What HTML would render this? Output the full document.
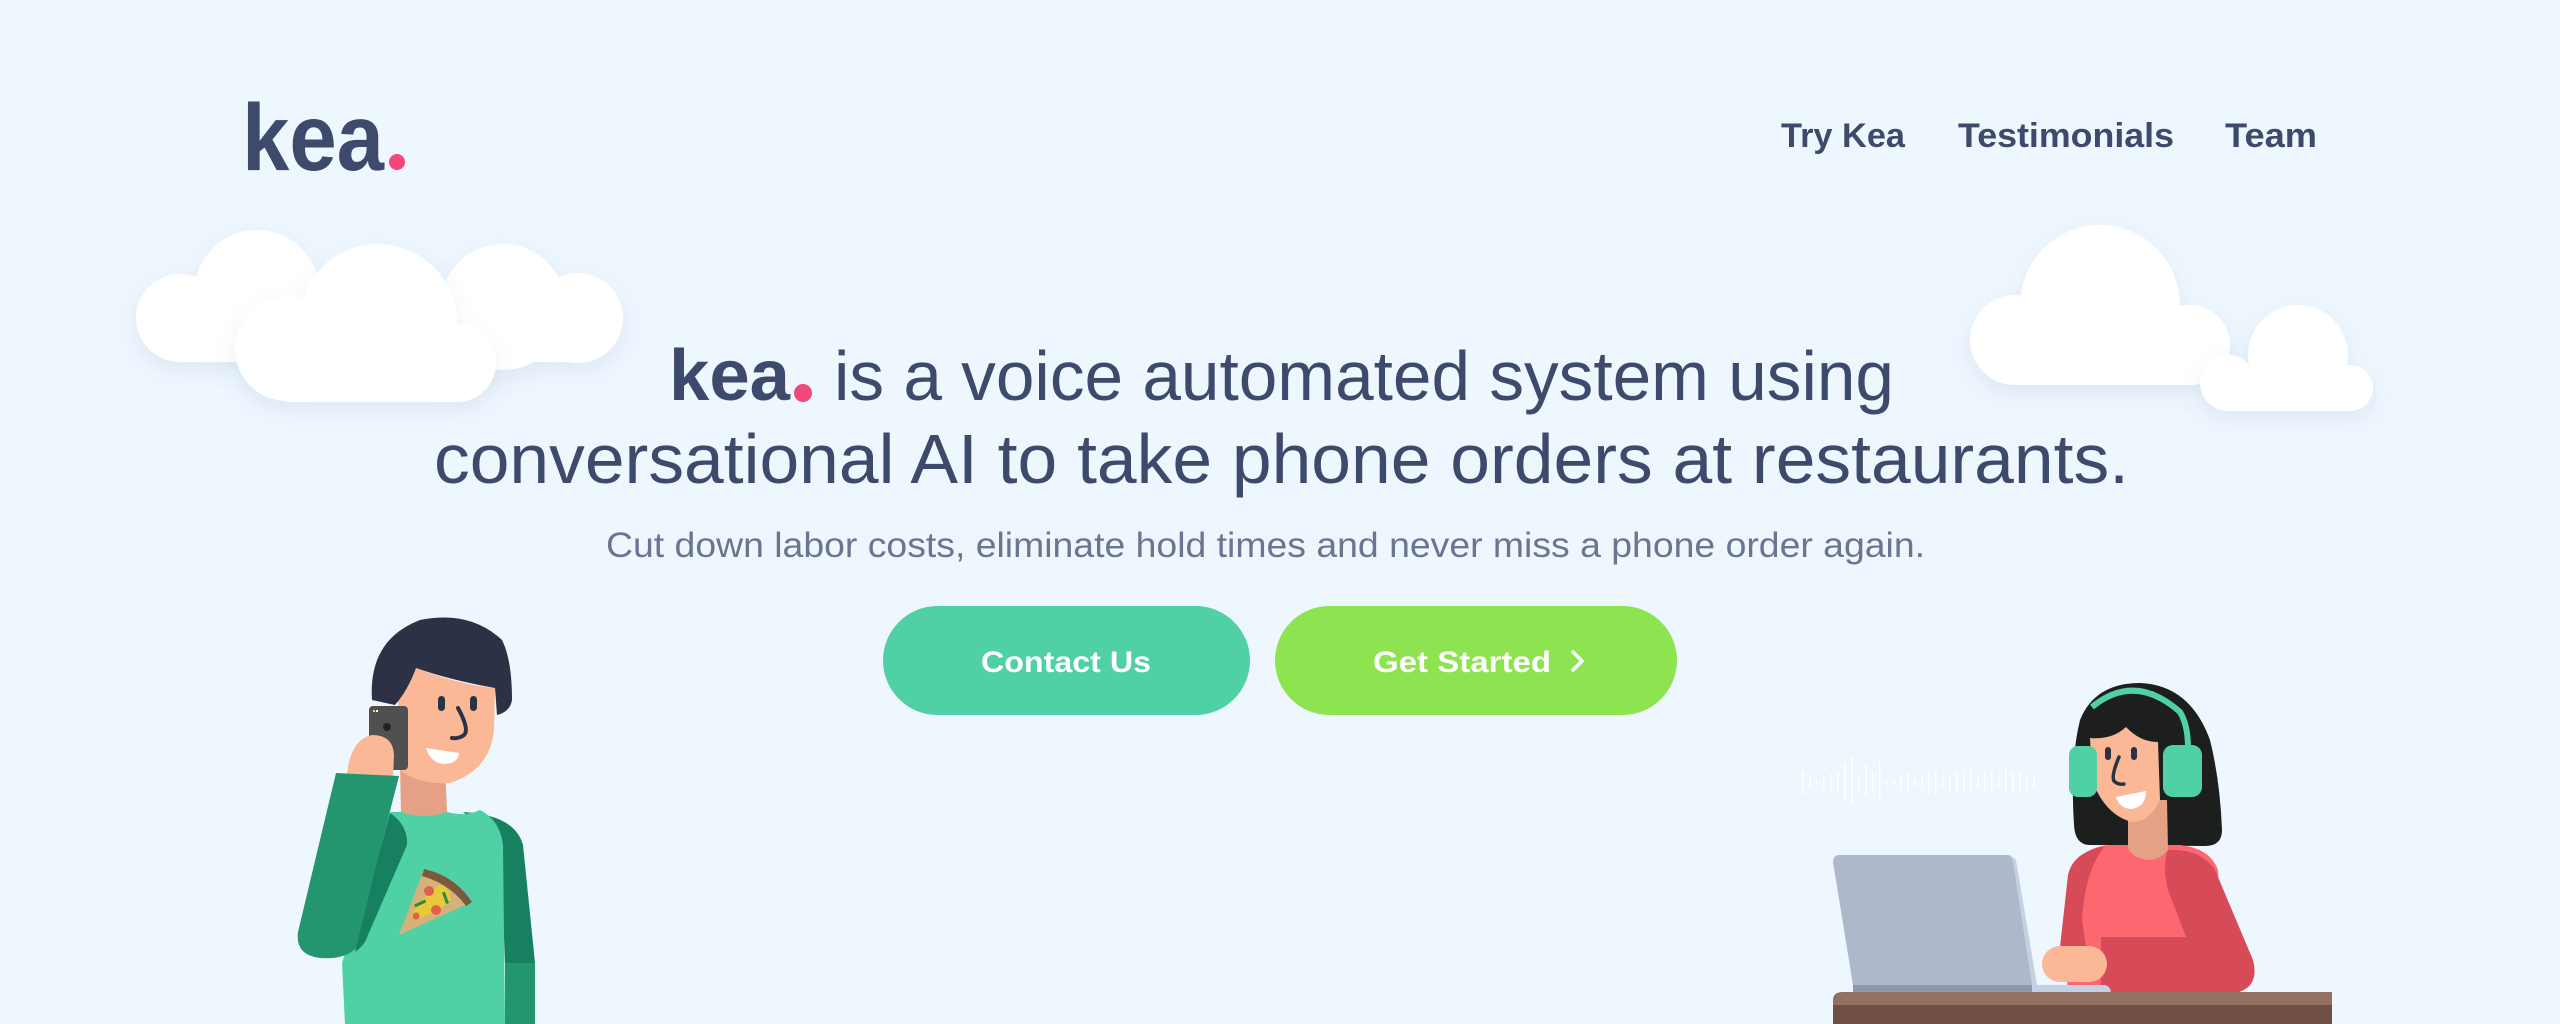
<!DOCTYPE html>
<html><head><meta charset="utf-8"><style>
html,body{margin:0;padding:0;background:#eef6fe;overflow:hidden}
svg{display:block}
text{font-family:"Liberation Sans",sans-serif}
</style></head><body>
<svg width="2560" height="1024" viewBox="0 0 2560 1024" xmlns="http://www.w3.org/2000/svg">
<defs>
<filter id="sh" x="-20%" y="-20%" width="140%" height="160%"><feDropShadow dx="0" dy="8" stdDeviation="10" flood-color="#6a7fa8" flood-opacity="0.12"/></filter>
</defs>
<rect width="2560" height="1024" fill="#eef6fe"/>

<!-- clouds left -->
<g fill="#fff" filter="url(#sh)">
<circle cx="180" cy="318" r="44"/><circle cx="257" cy="293" r="63"/>
<circle cx="503" cy="307" r="63"/><circle cx="578" cy="318" r="45"/>
<rect x="180" y="290" width="398" height="72"/>
</g>
<g fill="#fff" filter="url(#sh)">
<circle cx="287" cy="349" r="52"/><circle cx="378" cy="323" r="79"/><circle cx="457" cy="363" r="39"/>
<rect x="287" y="330" width="170" height="72"/>
</g>
<!-- clouds right -->
<g fill="#fff" filter="url(#sh)">
<circle cx="2015" cy="340" r="45"/><circle cx="2100" cy="305" r="80"/><circle cx="2190" cy="345" r="40"/>
<rect x="2015" y="320" width="175" height="65"/>
</g>
<g fill="#fff" filter="url(#sh)">
<circle cx="2228" cy="383" r="28"/><circle cx="2298" cy="355" r="50"/><circle cx="2350" cy="388" r="23"/>
<rect x="2228" y="370" width="122" height="41"/>
</g>

<!-- logo -->
<text x="242" y="170" font-size="95" font-weight="bold" fill="#3d4a6b" textLength="142" lengthAdjust="spacingAndGlyphs">kea</text>
<circle cx="397" cy="162" r="8" fill="#f2497a"/>

<!-- nav -->
<g font-size="34" font-weight="bold" fill="#3d4a6b">
<text x="1781" y="147" textLength="124" lengthAdjust="spacingAndGlyphs">Try Kea</text>
<text x="1958" y="147" textLength="216" lengthAdjust="spacingAndGlyphs">Testimonials</text>
<text x="2225" y="147" textLength="92" lengthAdjust="spacingAndGlyphs">Team</text>
</g>

<!-- headline -->
<text x="669" y="400" font-size="72" font-weight="bold" fill="#3d4a6b" textLength="121" lengthAdjust="spacingAndGlyphs">kea</text>
<circle cx="803" cy="393" r="9" fill="#f2497a"/>
<text x="834" y="400" font-size="70" fill="#3d4a6b" textLength="1060" lengthAdjust="spacingAndGlyphs">is a voice automated system using</text>
<text x="434" y="483" font-size="70" fill="#3d4a6b" textLength="1695" lengthAdjust="spacingAndGlyphs">conversational AI to take phone orders at restaurants.</text>

<text x="606" y="557" font-size="35" fill="#6b7490" textLength="1319" lengthAdjust="spacingAndGlyphs">Cut down labor costs, eliminate hold times and never miss a phone order again.</text>

<!-- buttons -->
<rect x="883" y="606" width="367" height="109" rx="54.5" fill="#4fd1a5"/>
<text x="981" y="672" font-size="30" font-weight="bold" fill="#fff" textLength="170" lengthAdjust="spacingAndGlyphs">Contact Us</text>
<rect x="1275" y="606" width="402" height="109" rx="54.5" fill="#8ee350"/>
<text x="1373" y="672" font-size="30" font-weight="bold" fill="#fff" textLength="178" lengthAdjust="spacingAndGlyphs">Get Started</text>
<path d="M1573 652 L1582 661 L1573 670" fill="none" stroke="#fff" stroke-width="3.5" stroke-linecap="round" stroke-linejoin="round"/>

<!-- man -->
<g>
<!-- back right arm -->
<path d="M463 812 Q515 815 523 845 L535 963 L505 963 L500 840 Z" fill="#168060"/>
<rect x="505" y="963" width="30" height="61" fill="#23966f"/>
<!-- body -->
<path d="M390 812 L447 812 Q465 817 480 810 Q500 820 503 845 L505 1024 L345 1024 L342 963 Z" fill="#4fd1a5"/>
<!-- neck -->
<path d="M400 765 L445 765 L447 812 Q425 820 401 812 Z" fill="#e6a085"/>
<!-- face -->
<path d="M416 668 Q460 685 495 688 L494 730 Q490 770 450 783 Q420 785 400 770 L398 700 Z" fill="#fbb896"/>
<!-- hair -->
<path d="M372 700 Q368 640 420 620 Q470 610 502 640 Q512 660 512 700 Q510 712 497 715 L495 688 Q450 680 416 668 Q408 690 395 705 Z" fill="#2c3145"/>
<!-- eyes -->
<rect x="438" y="696" width="7" height="15" rx="3.5" fill="#2c3145"/>
<rect x="470" y="696" width="7" height="15" rx="3.5" fill="#2c3145"/>
<path d="M458 708 Q470 730 464 735 Q459 739 452 738" fill="none" stroke="#2c3145" stroke-width="4" stroke-linecap="round"/>
<path d="M426 748 L459 753 Q458 764 443 764 Q430 762 426 748 Z" fill="#fff"/>
<!-- phone -->
<rect x="369" y="706" width="39" height="64" rx="4" fill="#505050"/>
<circle cx="387" cy="727" r="4" fill="#222"/>
<rect x="373" y="710" width="2" height="2" fill="#f5d76e"/><rect x="376" y="710" width="2" height="2" fill="#fff"/>
<!-- hand -->
<path d="M347 775 Q350 740 372 735 Q393 735 394 755 L393 777 Z" fill="#fbb896"/>
<!-- sleeve -->
<path d="M336 773 L399 776 L380 850 L360 943 Q350 960 320 958 Q295 955 298 932 Z" fill="#23966f"/>
<path d="M390 813 Q408 825 407 845 L368 935 Q365 945 355 952 L380 850 Z" fill="#168060"/>
<!-- pizza -->
<path d="M399 935 L424 869 L472 902 Z" fill="#d4b27a"/>
<path d="M424 869 Q455 876 472 902 L466 906 Q450 884 422 876 Z" fill="#7a5a3a"/>
<path d="M410 917 Q420 898 440 885 Q452 888 450 900 Q440 912 420 918 Z" fill="#e8c93a"/>
<circle cx="429" cy="891" r="5" fill="#e0604a"/><circle cx="436" cy="910" r="5" fill="#e0604a"/><circle cx="416" cy="916" r="3.5" fill="#e0604a"/>
<rect x="414" y="902" width="12" height="3" fill="#2e8b3a" transform="rotate(-25 420 903)"/>
<rect x="444" y="892" width="3" height="12" fill="#2e8b3a" transform="rotate(-20 445 898)"/>
</g>

<!-- sound wave -->
<g fill="#fff">
<rect x="1802" y="771" width="1.6" height="24"/><rect x="1809" y="777" width="1.6" height="12"/><rect x="1816" y="779" width="1.6" height="6"/>
<rect x="1823" y="776" width="1.6" height="14"/><rect x="1830" y="774" width="1.6" height="18"/><rect x="1837" y="772" width="1.6" height="20"/>
<rect x="1844" y="763" width="1.6" height="38"/><rect x="1851" y="757" width="1.6" height="48"/><rect x="1858" y="774" width="1.6" height="16"/>
<rect x="1865" y="765" width="1.6" height="32"/><rect x="1872" y="772" width="1.6" height="20"/><rect x="1879" y="762" width="1.6" height="40"/>
<rect x="1886" y="779" width="1.6" height="6"/><rect x="1893" y="780" width="1.6" height="4"/><rect x="1900" y="776" width="1.6" height="14"/>
<rect x="1907" y="773" width="1.6" height="18"/><rect x="1914" y="779" width="1.6" height="8"/><rect x="1921" y="776" width="1.6" height="14"/>
<rect x="1928" y="770" width="1.6" height="24"/><rect x="1935" y="770" width="1.6" height="24"/><rect x="1942" y="775" width="1.6" height="14"/>
<rect x="1949" y="774" width="1.6" height="18"/><rect x="1956" y="772" width="1.6" height="20"/><rect x="1963" y="770" width="1.6" height="24"/>
<rect x="1970" y="768" width="1.6" height="26"/><rect x="1977" y="776" width="1.6" height="12"/><rect x="1984" y="772" width="1.6" height="20"/>
<rect x="1991" y="771" width="1.6" height="22"/><rect x="1998" y="775" width="1.6" height="14"/><rect x="2005" y="769" width="1.6" height="24"/>
<rect x="2012" y="772" width="1.6" height="20"/><rect x="2019" y="772" width="1.6" height="20"/><rect x="2026" y="774" width="1.6" height="16"/>
<rect x="2033" y="776" width="1.6" height="12"/>
</g>

<!-- woman -->
<g>
<path d="M2080 720 Q2095 683 2140 683 Q2190 685 2210 740 Q2220 780 2222 830 Q2222 846 2205 846 L2090 845 Q2075 845 2074 825 Q2070 760 2080 720 Z" fill="#1c1f1e"/>
<!-- torso -->
<path d="M2067 993 L2070 880 Q2075 848 2110 845 L2180 845 Q2210 848 2218 870 L2225 993 Z" fill="#fc6770"/>
<path d="M2060 947 L2068 875 Q2073 852 2105 846 Q2085 870 2082 920 L2086 947 Z" fill="#d64b57"/>
<!-- neck -->
<path d="M2128 800 L2167 800 L2168 850 Q2160 860 2148 860 Q2132 858 2128 848 Z" fill="#e6a085"/>
<!-- face -->
<path d="M2090 738 Q2112 740 2126 727 Q2140 742 2158 742 L2160 800 Q2150 822 2132 822 Q2105 815 2092 780 Z" fill="#fbb896"/>
<!-- headphones -->
<path d="M2092 707 Q2135 672 2180 712 Q2188 725 2188 748" fill="none" stroke="#4fd1a5" stroke-width="6"/>
<rect x="2069" y="746" width="28" height="51" rx="9" fill="#4fd1a5"/>
<rect x="2163" y="745" width="39" height="52" rx="10" fill="#4fd1a5"/>
<rect x="2105" y="747" width="6" height="13" rx="3" fill="#2c3145"/>
<rect x="2131" y="747" width="6" height="13" rx="3" fill="#2c3145"/>
<path d="M2119 757 Q2111 776 2114 781 Q2118 785 2124 784" fill="none" stroke="#2c3145" stroke-width="3.5" stroke-linecap="round"/>
<path d="M2116 797 L2146 791 Q2146 807 2131 809 Q2119 808 2116 797 Z" fill="#fff"/>
<!-- right sleeve -->
<path d="M2168 850 Q2200 848 2215 870 L2253 960 Q2260 988 2235 993 L2101 993 L2101 937 L2186 937 L2168 890 Q2162 865 2168 850 Z" fill="#d64b57"/>
<!-- hand -->
<rect x="2042" y="946" width="65" height="36" rx="18" fill="#fbb896"/>
<!-- laptop -->
<path d="M1838 855 L2010 855 L2016 860 L2037 985 L2032 985 L2010 862 Z" fill="#c5d0e3"/>
<path d="M1838 855 L2007 855 Q2012 856 2013 862 L2032 985 L1853 985 L1833 862 Q1833 856 1838 855 Z" fill="#adb8cb"/>
<rect x="1853" y="985" width="180" height="8" fill="#8e99ae"/>
<path d="M2032 985 L2105 985 Q2110 986 2111 992 L2032 992 Z" fill="#c5d0e3"/>
<!-- desk -->
<path d="M1833 1000 Q1833 992 1843 992 L2332 992 L2332 1024 L1833 1024 Z" fill="#937062"/>
<rect x="1833" y="1005" width="499" height="19" fill="#6e4f42"/>
</g>
</svg>
</body></html>
